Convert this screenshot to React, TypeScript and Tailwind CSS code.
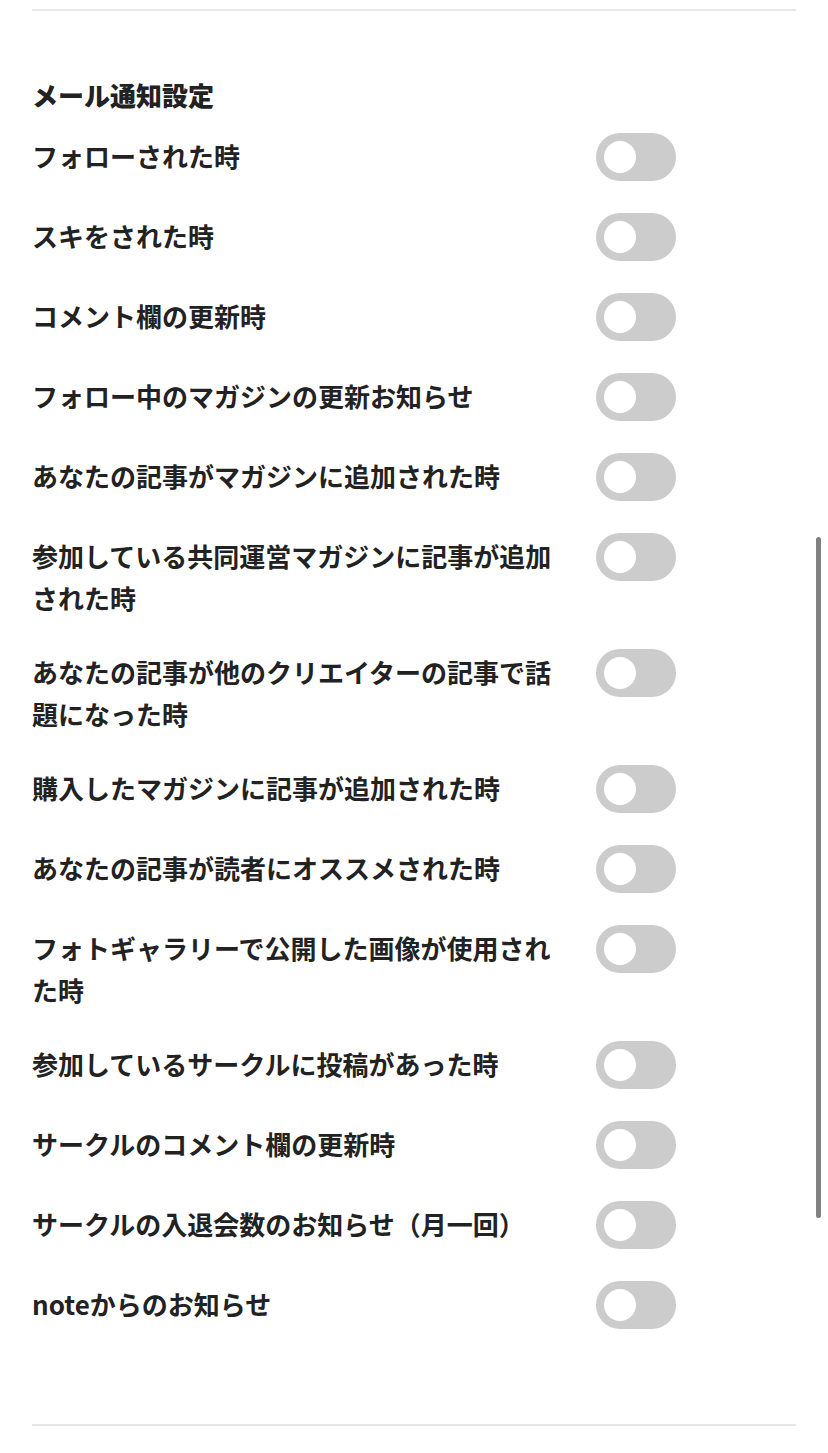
import React from 'react'

const items: string[] = [
  'フォローされた時',
  'スキをされた時',
  'コメント欄の更新時',
  'フォロー中のマガジンの更新お知らせ',
  'あなたの記事がマガジンに追加された時',
  '参加している共同運営マガジンに記事が追加された時',
  'あなたの記事が他のクリエイターの記事で話題になった時',
  '購入したマガジンに記事が追加された時',
  'あなたの記事が読者にオススメされた時',
  'フォトギャラリーで公開した画像が使用された時',
  '参加しているサークルに投稿があった時',
  'サークルのコメント欄の更新時',
  'サークルの入退会数のお知らせ（月一回）',
  'noteからのお知らせ',
]

function Toggle() {
  return (
    <div className="flex h-[48px] w-[80px] shrink-0 items-center rounded-full bg-[#cccccc] px-[8px]">
      <div className="h-[32px] w-[32px] rounded-full bg-white" />
    </div>
  )
}

export default function App() {
  return (
    <div
      className="relative min-h-[1453px] bg-white text-[#222222]"
      style={{ fontFamily: '"Noto Sans CJK JP", "Noto Sans", sans-serif' }}
    >
      <div className="mx-[32px] pt-[9px]">
        <div className="h-[2px] bg-[#e6e6e6]" />

        <h2 className="mt-[66px] text-[26px] font-black leading-[36px]">メール通知設定</h2>

        <ul className="mt-[20px] flex flex-col gap-[32px]">
          {items.map((label) => (
            <li key={label} className="flex items-start gap-[32px]">
              <span className="-mb-[2px] mt-[2px] w-[532px] text-[26px] font-semibold leading-[42px]">
                {label}
              </span>
              <Toggle />
            </li>
          ))}
        </ul>

        <div className="mt-[95px] h-[2px] bg-[#e6e6e6]" />
      </div>

      {/* scroll indicator */}
      <div className="absolute left-[816px] top-[537px] h-[681px] w-[5px] rounded-full bg-[#808080]" />
    </div>
  )
}
